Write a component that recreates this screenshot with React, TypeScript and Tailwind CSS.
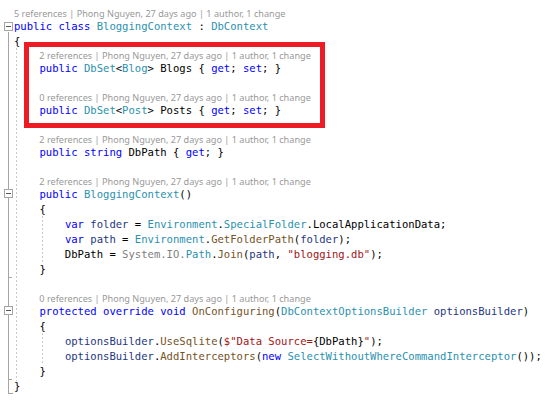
import React from 'react';

type Tok = [string, string?];

const K = 'text-[#0000ff]';
const T = 'text-[#2b91af]';
const V = 'text-[#1f377f]';
const M = 'text-[#74531f]';
const S = 'text-[#a31515]';
const G = 'text-[#808080]';

type Line =
  | { kind: 'lens'; indent: number; text: string }
  | { kind: 'code'; toks: Tok[] };

const lens = (indent: number, refs: string): Line => ({
  kind: 'lens',
  indent,
  text: `${refs} | Phong Nguyen, 27 days ago | 1 author, 1 change`,
});

const code = (...toks: Tok[]): Line => ({ kind: 'code', toks });

const lines: Line[] = [
  lens(0, '5 references'),
  code(['public', K], [' '], ['class', K], [' '], ['BloggingContext', T], [' : '], ['DbContext', T]),
  code(['{']),
  lens(4, '2 references'),
  code(['    '], ['public', K], [' '], ['DbSet', T], ['<'], ['Blog', T], ['> Blogs { '], ['get', K], ['; '], ['set', K], ['; }']),
  code([' ']),
  lens(4, '0 references'),
  code(['    '], ['public', K], [' '], ['DbSet', T], ['<'], ['Post', T], ['> Posts { '], ['get', K], ['; '], ['set', K], ['; }']),
  code([' ']),
  lens(4, '2 references'),
  code(['    '], ['public', K], [' '], ['string', K], [' DbPath { '], ['get', K], ['; }']),
  code([' ']),
  lens(4, '2 references'),
  code(['    '], ['public', K], [' '], ['BloggingContext', T], ['()']),
  code(['    {']),
  code(['        '], ['var', K], [' '], ['folder', V], [' = '], ['Environment', T], ['.'], ['SpecialFolder', T], ['.LocalApplicationData;']),
  code(['        '], ['var', K], [' '], ['path', V], [' = '], ['Environment', T], ['.'], ['GetFolderPath', M], ['('], ['folder', V], [');']),
  code(['        DbPath = '], ['System.IO.', G], ['Path', T], ['.'], ['Join', M], ['('], ['path', V], [', '], ['"blogging.db"', S], [');']),
  code(['    }']),
  code([' ']),
  lens(4, '0 references'),
  code(['    '], ['protected', K], [' '], ['override', K], [' '], ['void', K], [' '], ['OnConfiguring', M], ['('], ['DbContextOptionsBuilder', T], [' '], ['optionsBuilder', V], [')']),
  code(['    {']),
  code(['        '], ['optionsBuilder', V], ['.'], ['UseSqlite', M], ['('], ['$"Data Source=', S], ['{DbPath}'], ['"', S], [');']),
  code(['        '], ['optionsBuilder', V], ['.'], ['AddInterceptors', M], ['('], ['new', K], [' '], ['SelectWithoutWhereCommandInterceptor', T], ['());']),
  code(['    }']),
  code(['}']),
];

// outlining margin + indent guides
const Gutter = () => (
  <svg className="absolute left-0 top-0" width="60" height="402" viewBox="0 0 60 402">
    <g stroke="#a5a5a5" strokeWidth="1" fill="none">
      <line x1="8.5" y1="32" x2="8.5" y2="189" />
      <line x1="8.5" y1="198" x2="8.5" y2="306" />
      <line x1="8.5" y1="315" x2="8.5" y2="393.5" />
      <line x1="8.5" y1="277.5" x2="12" y2="277.5" />
      <line x1="8.5" y1="379.5" x2="12" y2="379.5" />
      <line x1="8" y1="393.5" x2="13" y2="393.5" />
      <rect x="4.5" y="22.5" width="8" height="8" fill="#fff" />
      <rect x="4.5" y="189.5" width="8" height="8" fill="#fff" />
      <rect x="4.5" y="306.5" width="8" height="8" fill="#fff" />
    </g>
    <g stroke="#555" strokeWidth="1">
      <line x1="6" y1="26.5" x2="11" y2="26.5" />
      <line x1="6" y1="193.5" x2="11" y2="193.5" />
      <line x1="6" y1="310.5" x2="11" y2="310.5" />
    </g>
    <g stroke="#c8c8c8" strokeWidth="1" strokeDasharray="2 2">
      <line x1="16.5" y1="48" x2="16.5" y2="381" />
      <line x1="42.5" y1="216" x2="42.5" y2="263" />
      <line x1="42.5" y1="333" x2="42.5" y2="365" />
    </g>
  </svg>
);

export default function App() {
  return (
    <div className="relative w-[551px] h-[402px] bg-white overflow-hidden">
      <Gutter />
      <div className="relative pl-[14px] pt-[6.5px]">
        {lines.map((l, i) =>
          l.kind === 'lens' ? (
            <div
              key={i}
              className="h-[12px] leading-[13px] text-[9.15px] text-[#999999] whitespace-pre font-['Noto_Sans',sans-serif]"
              style={{ paddingLeft: l.indent * 6.34 }}
            >
              {l.text}
            </div>
          ) : (
            <div
              key={i}
              className="h-[15px] leading-[15px] text-[10.57px] text-black whitespace-pre font-['DejaVu_Sans_Mono',monospace]"
            >
              {l.toks.map((t, j) => (
                <span key={j} className={t[1]}>
                  {t[0]}
                </span>
              ))}
            </div>
          )
        )}
      </div>
      <div className="absolute left-[24px] top-[42px] w-[301px] h-[86px] border-[5px] border-[#ed1c24]" />
    </div>
  );
}
